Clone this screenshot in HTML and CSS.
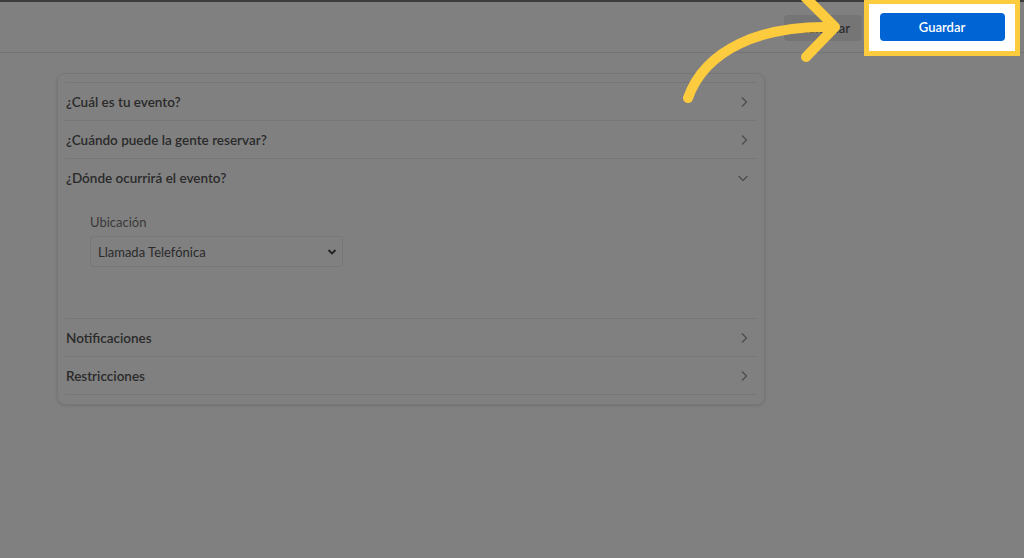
FILE: index.html
```html
<!DOCTYPE html>
<html lang="es">
<head>
<meta charset="utf-8">
<title>Evento</title>
<link rel="stylesheet" href="styles.css">
</head>
<body>
<div class="topline"></div>
<header class="header">
  <button class="btn-cancel">Cancelar</button>
  <div class="btn-spacer"></div>
</header>
<div class="highlight">
  <button class="btn-save">Guardar</button>
</div>

<main class="main">
  <section class="card">
    <div class="item">
      <div class="item-head"><span>¿Cuál es tu evento?</span>
        <svg class="chev" width="10" height="12" viewBox="0 0 10 12"><path d="M3 1.5 L7.5 6 L3 10.5" fill="none" stroke="#4a4a4a" stroke-width="1.2"/></svg>
      </div>
    </div>
    <div class="item">
      <div class="item-head"><span>¿Cuándo puede la gente reservar?</span>
        <svg class="chev" width="10" height="12" viewBox="0 0 10 12"><path d="M3 1.5 L7.5 6 L3 10.5" fill="none" stroke="#4a4a4a" stroke-width="1.2"/></svg>
      </div>
    </div>
    <div class="item">
      <div class="item-head"><span>¿Dónde ocurrirá el evento?</span>
        <svg class="chev" width="12" height="10" viewBox="0 0 12 10"><path d="M1.5 3 L6 7.5 L10.5 3" fill="none" stroke="#4a4a4a" stroke-width="1.2"/></svg>
      </div>
      <div class="item-body">
        <label class="field-label">Ubicación</label>
        <div class="select">
          <span>Llamada Telefónica</span>
          <svg width="10" height="8" viewBox="0 0 10 8"><path d="M1.5 2 L5 5.5 L8.5 2" fill="none" stroke="#222" stroke-width="1.8"/></svg>
        </div>
      </div>
    </div>
    <div class="item">
      <div class="item-head"><span>Notificaciones</span>
        <svg class="chev" width="10" height="12" viewBox="0 0 10 12"><path d="M3 1.5 L7.5 6 L3 10.5" fill="none" stroke="#4a4a4a" stroke-width="1.2"/></svg>
      </div>
    </div>
    <div class="item last">
      <div class="item-head"><span>Restricciones</span>
        <svg class="chev" width="10" height="12" viewBox="0 0 10 12"><path d="M3 1.5 L7.5 6 L3 10.5" fill="none" stroke="#4a4a4a" stroke-width="1.2"/></svg>
      </div>
    </div>
  </section>
</main>

<svg class="arrow" width="1024" height="120" viewBox="0 0 1024 120">
  <path d="M688 98 C 705 50, 760 25, 833 27" fill="none" stroke="#fdcb3e" stroke-width="10" stroke-linecap="round"/>
  <path d="M804 -4 L835 27 L806 57" fill="none" stroke="#fdcb3e" stroke-width="10" stroke-linecap="round" stroke-linejoin="round"/>
</svg>
</body>
</html>
```
FILE: styles.css
```css
* { box-sizing: border-box; }
html, body { margin: 0; padding: 0; }
body {
  background: #808080;
  font-family: Lato, "Liberation Sans", sans-serif;
  color: #262626;
  width: 1024px;
  height: 558px;
  overflow: hidden;
  position: relative;
}
.topline { height: 2px; background: #3c3c3c; }
.header {
  height: 51px;
  border-bottom: 1px solid #747474;
  display: flex;
  justify-content: flex-end;
  align-items: center;
  padding-right: 19px;
  gap: 18px;
}
.btn-cancel {
  width: 78px;
  height: 26px;
  margin-top: 1px;
  border: none;
  border-radius: 4px;
  background: #757575;
  color: #2e2e2e;
  font-family: inherit;
  font-size: 13px;
  font-weight: 600;
  text-align: right;
  padding: 0 12px 0 0;
}
.btn-spacer { width: 125px; }
.highlight {
  position: absolute;
  left: 864px;
  top: -1px;
  width: 156px;
  height: 57px;
  border: 5px solid #fdcb3e;
  background: #ffffff;
  display: flex;
  align-items: center;
  justify-content: center;
  padding-bottom: 1px;
}
.btn-save {
  width: 125px;
  height: 28px;
  border: none;
  border-radius: 4px;
  background: #0164d4;
  color: #ffffff;
  font-family: inherit;
  font-size: 13px;
  font-weight: 600;
}
.main { padding: 20px 0 0 57px; }
.card {
  width: 708px;
  border: 1px solid #767676;
  border-radius: 8px;
  padding: 8px 7px 9px 7px;
  box-shadow: 0 1px 3px rgba(0,0,0,0.12);
}
.item { border-top: 1px solid #777777; }
.item.last { border-bottom: 1px solid #777777; }
.item-head {
  height: 37px;
  display: flex;
  align-items: center;
  justify-content: space-between;
  padding: 0 8px 0 1px;
  font-size: 13.5px;
  font-weight: 600;
  color: #2a2a2a;
}
.chev { display: block; }
.item-body {
  height: 122px;
  padding: 18px 0 0 25px;
}
.field-label {
  display: block;
  font-size: 13px;
  color: #3a3a3a;
  line-height: 16px;
  margin-bottom: 6px;
}
.select {
  width: 253px;
  height: 31px;
  border: 1px solid #777777;
  border-radius: 3px;
  display: flex;
  align-items: center;
  justify-content: space-between;
  padding: 0 5px 0 7px;
  font-size: 13px;
  color: #2a2a2a;
}
.arrow {
  position: absolute;
  left: 0;
  top: 0;
  pointer-events: none;
}
```
